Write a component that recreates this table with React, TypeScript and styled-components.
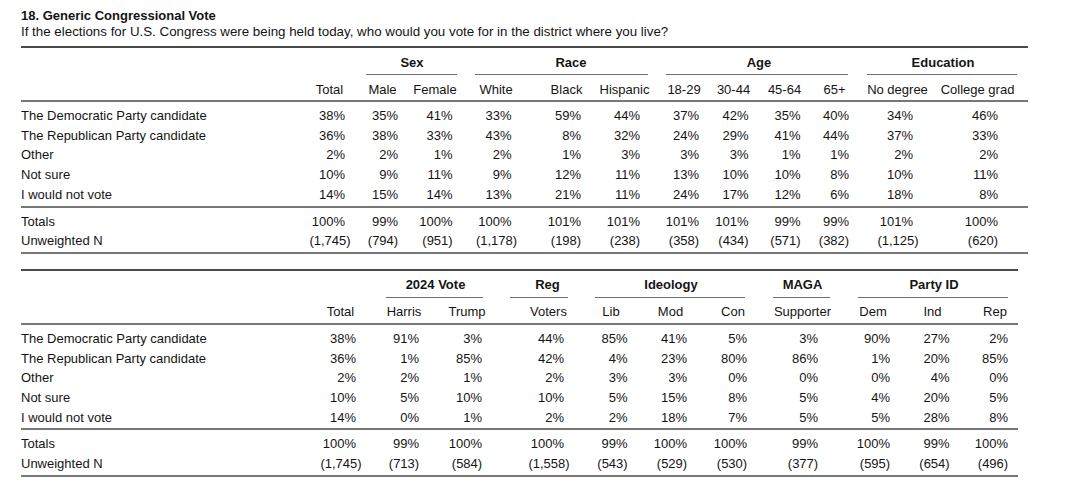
import React from "react";
import styled, { createGlobalStyle } from "styled-components";

type Col = { name: string; c: number; n: number };
type Group = { label: string; from: number; to: number; ul: [number, number]; tc: number };
type Row = { label: string; values: number[] };
type TableDef = {
  left: number;
  right: number;
  edges: number[]; // first = label right edge, then each column's right edge
  cols: Col[];
  groups: Group[];
  rows: Row[];
  totals: number[];
  ns: string[];
};

const GlobalStyle = createGlobalStyle`
  html, body { margin: 0; padding: 0; background: #ffffff; }
`;

const Page = styled.div`
  padding: 7.5px 0 0 21px;
  font-family: "Liberation Sans", Arial, Helvetica, sans-serif;
  font-size: 13px;
  color: #141414;
`;

const Title = styled.div`
  font-weight: bold;
  line-height: 16px;
`;

const Subtitle = styled.div`
  font-size: 13.33px;
  line-height: 16px;
`;

const Table = styled.div<{ $width: number; $mt: number }>`
  width: ${(p) => p.$width}px;
  margin-top: ${(p) => p.$mt}px;
  border-top: 2px solid #4a4a4a;
  border-bottom: 2px solid #777777;
`;

const HeadGrid = styled.div<{ $cols: string }>`
  display: grid;
  grid-template-columns: ${(p) => p.$cols};
  grid-template-rows: auto auto;
  padding: 6.5px 0 2.5px;
  border-bottom: 2px solid #777777;
`;

const GroupCell = styled.div<{ $start: number; $end: number }>`
  grid-row: 1;
  grid-column: ${(p) => p.$start} / ${(p) => p.$end};
  display: flex;
  flex-direction: column;
`;

const Shifted = styled.div<{ $dx: number }>`
  display: flex;
  justify-content: center;
  white-space: nowrap;
  padding-left: ${(p) => (p.$dx > 0 ? 2 * p.$dx : 0)}px;
  padding-right: ${(p) => (p.$dx < 0 ? -2 * p.$dx : 0)}px;
`;

const GroupTitle = styled(Shifted)`
  font-weight: bold;
  line-height: 16px;
`;

const GroupRule = styled.div<{ $ml: number; $mr: number }>`
  height: 1px;
  margin: 3.5px ${(p) => p.$mr}px 0 ${(p) => p.$ml}px;
  background: #6f6f6f;
`;

const ColHead = styled(Shifted)<{ $col: number }>`
  grid-row: 2;
  grid-column: ${(p) => p.$col};
  margin-top: 6.5px;
  line-height: 16px;
`;

const Block = styled.div<{ $rule?: boolean }>`
  padding: 3.6px 0 1.2px;
  border-bottom: ${(p) => (p.$rule ? "2px solid #777777" : "none")};
`;

const DataRow = styled.div<{ $cols: string }>`
  display: grid;
  grid-template-columns: ${(p) => p.$cols};
  height: 19.75px;
  align-items: center;
`;

const Label = styled.div`
  white-space: nowrap;
`;

const ValueCell = styled(Shifted)``;

const Num = styled.div`
  width: 30px;
  display: flex;
  justify-content: flex-end;
  white-space: nowrap;
`;

const Count = styled.div`
  white-space: nowrap;
`;

const t1: TableDef = {
  left: 21,
  right: 1028,
  edges: [303, 358, 405.5, 466, 531.5, 591, 658.5, 708.5, 759, 812.5, 858, 936.5, 1018.5],
  cols: [
    { name: "Total", c: 329.5, n: 330 },
    { name: "Male", c: 382.5, n: 383 },
    { name: "Female", c: 435, n: 437.5 },
    { name: "White", c: 496, n: 496.5 },
    { name: "Black", c: 566.5, n: 566 },
    { name: "Hispanic", c: 624.5, n: 625 },
    { name: "18-29", c: 684, n: 684 },
    { name: "30-44", c: 733.5, n: 733.5 },
    { name: "45-64", c: 784.5, n: 785.5 },
    { name: "65+", c: 834.5, n: 834 },
    { name: "No degree", c: 897.5, n: 898 },
    { name: "College grad", c: 977.5, n: 983 },
  ],
  groups: [
    { label: "Sex", from: 1, to: 2, ul: [366, 457], tc: 412 },
    { label: "Race", from: 3, to: 5, ul: [475, 648], tc: 571 },
    { label: "Age", from: 6, to: 9, ul: [666, 848], tc: 759 },
    { label: "Education", from: 10, to: 11, ul: [867, 1017], tc: 943 },
  ],
  rows: [
    { label: "The Democratic Party candidate", values: [38, 35, 41, 33, 59, 44, 37, 42, 35, 40, 34, 46] },
    { label: "The Republican Party candidate", values: [36, 38, 33, 43, 8, 32, 24, 29, 41, 44, 37, 33] },
    { label: "Other", values: [2, 2, 1, 2, 1, 3, 3, 3, 1, 1, 2, 2] },
    { label: "Not sure", values: [10, 9, 11, 9, 12, 11, 13, 10, 10, 8, 10, 11] },
    { label: "I would not vote", values: [14, 15, 14, 13, 21, 11, 24, 17, 12, 6, 18, 8] },
  ],
  totals: [100, 99, 100, 100, 101, 101, 101, 101, 99, 99, 101, 100],
  ns: ["1,745", "794", "951", "1,178", "198", "238", "358", "434", "571", "382", "1,125", "620"],
};

const t2: TableDef = {
  left: 21,
  right: 1018,
  edges: [308, 373, 435, 506, 582.5, 643, 704.5, 760, 845, 906.5, 966.5, 1018],
  cols: [
    { name: "Total", c: 340.5, n: 341 },
    { name: "Harris", c: 404, n: 404 },
    { name: "Trump", c: 467, n: 467 },
    { name: "Voters", c: 548.5, n: 549 },
    { name: "Lib", c: 611, n: 612.5 },
    { name: "Mod", c: 670.5, n: 672 },
    { name: "Con", c: 733, n: 732 },
    { name: "Supporter", c: 802.5, n: 803 },
    { name: "Dem", c: 873, n: 875 },
    { name: "Ind", c: 932.5, n: 934.5 },
    { name: "Rep", c: 995, n: 993 },
  ],
  groups: [
    { label: "2024 Vote", from: 1, to: 2, ul: [386, 483], tc: 435.5 },
    { label: "Reg", from: 3, to: 3, ul: [510, 568], tc: 547.5 },
    { label: "Ideology", from: 4, to: 6, ul: [595, 745], tc: 671 },
    { label: "MAGA", from: 7, to: 7, ul: [773, 830], tc: 802.5 },
    { label: "Party ID", from: 8, to: 10, ul: [858, 1008], tc: 934 },
  ],
  rows: [
    { label: "The Democratic Party candidate", values: [38, 91, 3, 44, 85, 41, 5, 3, 90, 27, 2] },
    { label: "The Republican Party candidate", values: [36, 1, 85, 42, 4, 23, 80, 86, 1, 20, 85] },
    { label: "Other", values: [2, 2, 1, 2, 3, 3, 0, 0, 0, 4, 0] },
    { label: "Not sure", values: [10, 5, 10, 10, 5, 15, 8, 5, 4, 20, 5] },
    { label: "I would not vote", values: [14, 0, 1, 2, 2, 18, 7, 5, 5, 28, 8] },
  ],
  totals: [100, 99, 100, 100, 99, 100, 100, 99, 100, 99, 100],
  ns: ["1,745", "713", "584", "1,558", "543", "529", "530", "377", "595", "654", "496"],
};

function CrossTab({ def, mt }: { def: TableDef; mt: number }) {
  const bounds = [def.left, ...def.edges];
  const widths = bounds.slice(1).map((b, i) => b - bounds[i]);
  const cols = widths.map((w) => `${w}px`).join(" ");
  const colL = (i: number) => def.edges[i];
  const colR = (i: number) => def.edges[i + 1];
  const mid = (i: number) => (colL(i) + colR(i)) / 2;

  return (
    <Table $width={def.right - def.left} $mt={mt}>
      <HeadGrid $cols={cols}>
        {def.groups.map((g) => {
          const L = colL(g.from);
          const R = colR(g.to);
          return (
            <GroupCell key={g.label} $start={g.from + 2} $end={g.to + 3}>
              <GroupTitle $dx={g.tc - (L + R) / 2}>{g.label}</GroupTitle>
              <GroupRule $ml={g.ul[0] - L} $mr={R - g.ul[1]} />
            </GroupCell>
          );
        })}
        {def.cols.map((c, i) => (
          <ColHead key={c.name} $col={i + 2} $dx={c.c - mid(i)}>
            {c.name}
          </ColHead>
        ))}
      </HeadGrid>
      <Block $rule>
        {def.rows.map((r) => (
          <DataRow key={r.label} $cols={cols}>
            <Label>{r.label}</Label>
            {r.values.map((v, i) => (
              <ValueCell key={i} $dx={def.cols[i].n - mid(i)}>
                <Num>{v}%</Num>
              </ValueCell>
            ))}
          </DataRow>
        ))}
      </Block>
      <Block>
        <DataRow $cols={cols}>
          <Label>Totals</Label>
          {def.totals.map((v, i) => (
            <ValueCell key={i} $dx={def.cols[i].n - mid(i)}>
              <Num>{v}%</Num>
            </ValueCell>
          ))}
        </DataRow>
        <DataRow $cols={cols}>
          <Label>Unweighted N</Label>
          {def.ns.map((v, i) => (
            <ValueCell key={i} $dx={def.cols[i].n - mid(i)}>
              <Count>({v})</Count>
            </ValueCell>
          ))}
        </DataRow>
      </Block>
    </Table>
  );
}

export default function App() {
  return (
    <>
      <GlobalStyle />
      <Page>
        <Title>18. Generic Congressional Vote</Title>
        <Subtitle>
          If the elections for U.S. Congress were being held today, who would you vote for in the district where you live?
        </Subtitle>
        <CrossTab def={t1} mt={6.5} />
        <CrossTab def={t2} mt={15} />
      </Page>
    </>
  );
}
